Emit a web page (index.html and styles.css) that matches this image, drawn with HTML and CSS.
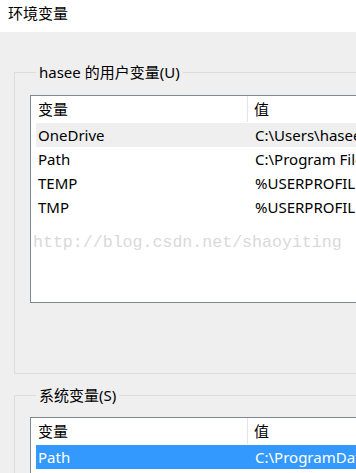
FILE: index.html
```html
<!DOCTYPE html>
<html lang="zh">
<head>
<meta charset="utf-8">
<title>环境变量</title>
<link rel="stylesheet" href="styles.css">
</head>
<body>
<div class="window">
  <div class="titlebar">环境变量</div>
  <div class="content">
    <fieldset class="group group-user">
      <legend class="group-label">hasee 的用户变量(U)</legend>
      <div class="listview listview-user">
        <div class="lv-header">
          <div class="lv-hcell lv-hcell-name">变量</div>
          <div class="lv-hcell lv-hcell-value">值</div>
        </div>
        <div class="lv-row lv-row-hover">
          <div class="lv-cell">OneDrive</div>
          <div class="lv-cell lv-cell-value">C:\Users\hasee\OneDrive</div>
        </div>
        <div class="lv-row">
          <div class="lv-cell">Path</div>
          <div class="lv-cell lv-cell-value">C:\Program Files\Java</div>
        </div>
        <div class="lv-row">
          <div class="lv-cell">TEMP</div>
          <div class="lv-cell lv-cell-value">%USERPROFILE%\AppData</div>
        </div>
        <div class="lv-row">
          <div class="lv-cell">TMP</div>
          <div class="lv-cell lv-cell-value">%USERPROFILE%\AppData</div>
        </div>
        <div class="watermark">http://blog.csdn.net/shaoyiting</div>
      </div>
    </fieldset>
    <fieldset class="group group-system">
      <legend class="group-label">系统变量(S)</legend>
      <div class="listview listview-system">
        <div class="lv-header">
          <div class="lv-hcell lv-hcell-name">变量</div>
          <div class="lv-hcell lv-hcell-value">值</div>
        </div>
        <div class="lv-row lv-row-selected">
          <div class="lv-cell">Path</div>
          <div class="lv-cell lv-cell-value">C:\ProgramData\Oracle</div>
        </div>
      </div>
    </fieldset>
  </div>
</div>
</body>
</html>
```
FILE: styles.css
```css
html, body {
  margin: 0;
  padding: 0;
}
body {
  width: 356px;
  height: 473px;
  overflow: hidden;
  background: #efefef;
  font-family: "Noto Sans", "Noto Sans CJK SC", sans-serif;
  font-size: 15px;
  color: #000;
}
.window {
  display: flex;
  flex-direction: column;
  width: 356px;
  height: 473px;
  overflow: hidden;
}
.titlebar {
  height: 32px;
  flex: none;
  background: #ffffff;
  padding-left: 8px;
  line-height: 26px;
  font-family: "Noto Sans CJK SC", sans-serif;
  font-size: 15px;
}
.content {
  flex: 1;
  padding-left: 14px;
  padding-top: 30px;
}
.group {
  margin: 0;
  padding: 0 0 70px 15px;
  border: 1px solid #dcdcdc;
  width: 420px;
  min-width: 0;
  box-sizing: border-box;
}
.group-system {
  margin-top: 11px;
  padding-bottom: 40px;
}
.group-label {
  margin-left: 6px;
  padding: 0 3px;
  line-height: 20px;
  height: 20px;
  font-family: "Noto Sans", "Noto Sans CJK SC", sans-serif;
  font-size: 15px;
}
.listview {
  position: relative;
  margin-top: 13px;
  height: 206px;
  background: #ffffff;
  border: 1px solid #828790;
  overflow: hidden;
}
.listview-system {
  margin-top: 12px;
}
.lv-header {
  display: grid;
  grid-template-columns: 217px 1fr;
  height: 27px;
}
.lv-hcell {
  padding-left: 7px;
  line-height: 26px;
  font-family: "Noto Sans CJK SC", sans-serif;
  white-space: nowrap;
}
.lv-hcell-name {
  border-right: 1px solid #e5e5e5;
  height: 26px;
}
.lv-hcell-value {
  padding-left: 6px;
}
.lv-row {
  display: grid;
  grid-template-columns: 212px 1fr;
  margin-left: 5px;
  height: 24px;
  line-height: 24px;
  white-space: nowrap;
}
.lv-cell {
  padding-left: 2px;
  overflow: hidden;
}
.lv-cell-value {
  padding-left: 7px;
}
.lv-row-hover {
  background: #efefef;
}
.lv-row-selected {
  background: #3399ff;
  color: #ffffff;
}
.watermark {
  position: absolute;
  left: 2px;
  top: 137px;
  font-family: "Liberation Mono", monospace;
  font-size: 16.6px;
  color: #d9d9d9;
  white-space: nowrap;
}
```
